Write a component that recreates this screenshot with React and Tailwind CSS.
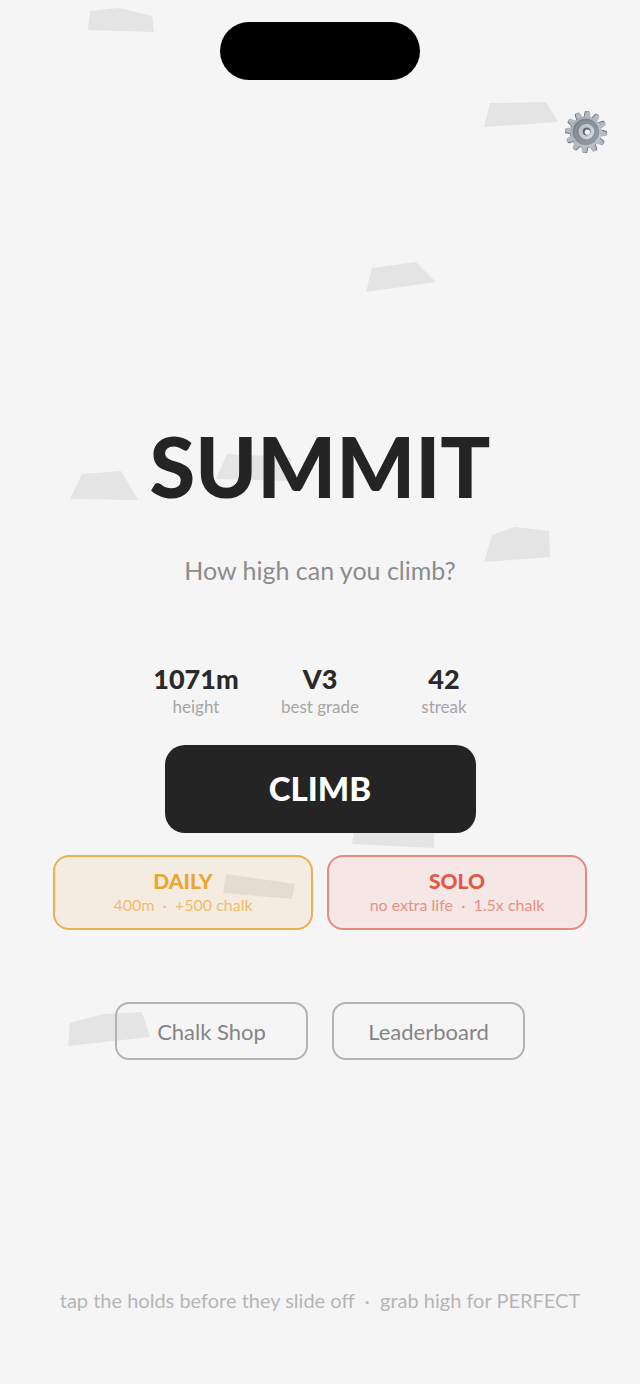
const holds = [
  "88,30 90,11 119,8 152,16 154,32",
  "484,127 490,103 546,102 558,122",
  "366,292 372,268 416,262 436,282",
  "70,499 82,474 121,471 138,500",
  "216,479 227,454 290,457 294,481",
  "484,562 492,535 515,527 549,531 550,557",
  "352,844 355,828 434,828 434,848",
  "223,893 226,874 295,884 292,899",
  "68,1046 70,1023 103,1014 142,1012 150,1037",
];

const stats = [
  { value: "1071m", label: "height" },
  { value: "V3", label: "best grade" },
  { value: "42", label: "streak" },
];

const teeth = [5, 35, 65, 95, 125, 155, 185, 215, 245, 275, 305, 335];

function Holds() {
  return (
    <svg
      viewBox="0 0 640 1384"
      className="absolute inset-x-0 top-0 w-full"
      aria-hidden="true"
    >
      {holds.map((points) => (
        <polygon key={points} points={points} fill="#e4e4e4" />
      ))}
    </svg>
  );
}

function Gear() {
  return (
    <svg viewBox="0 0 44 44" className="w-11 h-11" aria-hidden="true">
      <defs>
        <linearGradient id="metal" x1="0" y1="0" x2="1" y2="1">
          <stop offset="0" stopColor="#9aa1a8" />
          <stop offset="0.5" stopColor="#b4bac0" />
          <stop offset="1" stopColor="#c5cacf" />
        </linearGradient>
        <linearGradient id="groove" x1="0" y1="0" x2="1" y2="1">
          <stop offset="0" stopColor="#737c84" />
          <stop offset="1" stopColor="#98a1a9" />
        </linearGradient>
        <linearGradient id="hub" x1="0" y1="0" x2="1" y2="1">
          <stop offset="0" stopColor="#b4bbc2" />
          <stop offset="1" stopColor="#d9dde1" />
        </linearGradient>
      </defs>
      <g fill="#5f6870">
        {teeth.map((a) => (
          <path
            key={a}
            d="M18.2 8 L19 2 Q19.2 1 20.2 1 L22.5 1 Q23.5 1 23.7 2 L24.4 8 Z"
            transform={`rotate(${a} 22 22)`}
          />
        ))}
        <circle cx="21.5" cy="22.5" r="15.5" />
      </g>
      <g fill="#b3b9bf">
        {teeth.map((a) => (
          <path
            key={a}
            d="M18.8 8 L19.9 2.2 Q20.1 1.2 21 1.2 L23.2 1.2 Q24.1 1.2 24.3 2.2 L25.4 8 Z"
            transform={`rotate(${a} 22 22)`}
          />
        ))}
      </g>
      <circle cx="22" cy="22" r="15.6" fill="url(#metal)" />
      <circle cx="22" cy="22" r="13.2" fill="url(#groove)" />
      <circle cx="22" cy="22" r="10.4" fill="none" stroke="#8e979f" strokeWidth="1.2" />
      <circle cx="22.4" cy="21.6" r="7.8" fill="url(#hub)" />
      <circle cx="22.6" cy="21.6" r="4" fill="#616a73" />
      <circle cx="23.4" cy="22.2" r="2.6" fill="#f3f4f5" />
    </svg>
  );
}

export default function App() {
  return (
    <div className="relative min-h-screen bg-[#f5f5f5] font-['Lato',sans-serif]">
      <Holds />

      <div className="relative flex flex-col items-center pt-[22px] pb-[72px]">
        <div className="w-[200px] h-[58px] rounded-full bg-black" />

        <header className="w-full flex justify-end px-8 mt-[30px]">
          <button aria-label="Settings">
            <Gear />
          </button>
        </header>

        <h1 className="mt-[264px] text-[83px] leading-[96px] font-black text-[#242424]">
          SUMMIT
        </h1>
        <p className="mt-10 text-[25px] leading-8 text-[#8c8c8c]">
          How high can you climb?
        </p>

        <dl className="grid grid-cols-3 w-[372px] mt-[79px] text-center">
          {stats.map((stat) => (
            <div key={stat.label} className="flex flex-col-reverse gap-1">
              <dt className="text-[17px] leading-5 text-[#a6a6a6]">{stat.label}</dt>
              <dd className="text-[27px] leading-7 font-black text-[#2a2a2a]">
                {stat.value}
              </dd>
            </div>
          ))}
        </dl>

        <button className="mt-7 w-[311px] h-[88px] rounded-[20px] bg-[#242424] text-white text-[33px] font-black">
          CLIMB
        </button>

        <div className="flex justify-center gap-3.5 w-full mt-[22px] px-4">
          <button className="w-[260px] h-[75px] rounded-2xl border-2 border-[#ebb04f] bg-[#f59b31]/10">
            <span className="block text-[21px] leading-6 font-black text-[#eba62f]">
              DAILY
            </span>
            <span className="block text-base leading-6 whitespace-pre text-[#efbd6c]">
              {"400m  ·  +500 chalk"}
            </span>
          </button>
          <button className="w-[260px] h-[75px] rounded-2xl border-2 border-[#e78a7e] bg-[#f5503c]/8">
            <span className="block text-[21px] leading-6 font-black text-[#e05a48]">
              SOLO
            </span>
            <span className="block text-base leading-6 whitespace-pre text-[#e98f84]">
              {"no extra life  ·  1.5x chalk"}
            </span>
          </button>
        </div>

        <div className="flex justify-center gap-6 w-full mt-[72px] px-4">
          <button className="w-[193px] h-[58px] rounded-[14px] border-2 border-[#b3b3b3] text-[22px] text-[#858585]">
            Chalk Shop
          </button>
          <button className="w-[193px] h-[58px] rounded-[14px] border-2 border-[#b3b3b3] text-[22px] text-[#858585]">
            Leaderboard
          </button>
        </div>

        <p className="mt-[228px] text-[20px] leading-6 whitespace-pre text-[#b5b5b5]">
          {"tap the holds before they slide off  ·  grab high for PERFECT"}
        </p>
      </div>
    </div>
  );
}
